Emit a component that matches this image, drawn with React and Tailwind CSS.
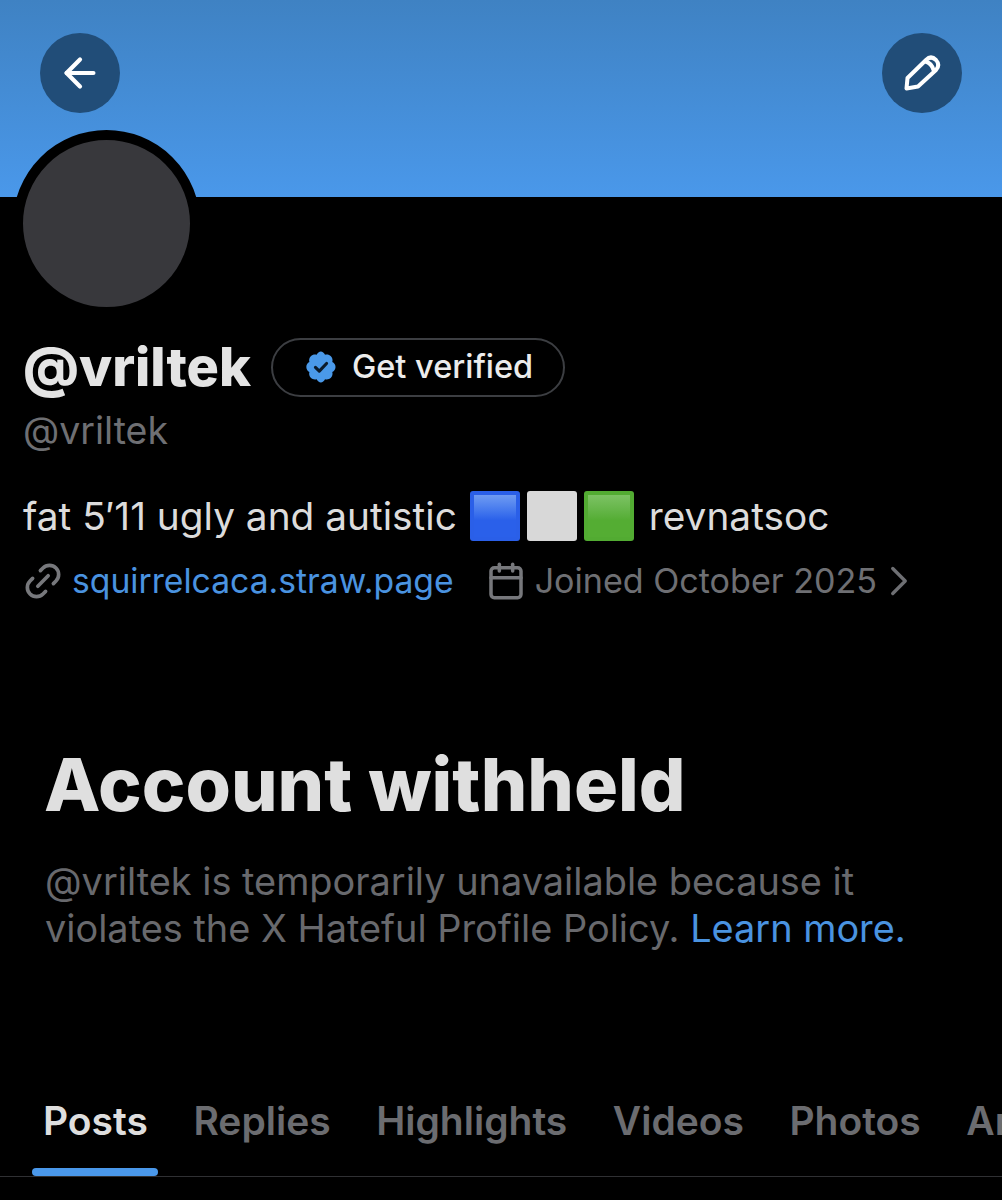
import React from 'react'
import { ArrowLeft, Calendar, ChevronRight, Link2 } from 'lucide-react'

const tabs = ['Posts', 'Replies', 'Highlights', 'Videos', 'Photos', 'Articles']

const RoundButton = ({ children }) => (
    <button className="w-[80px] h-[80px] rounded-full bg-[#214d78] flex items-center justify-center text-white">
        {children}
    </button>
)

const PencilIcon = () => (
    <svg width="80" height="80" viewBox="0 0 80 80" fill="none" stroke="currentColor" strokeWidth="4" strokeLinejoin="round" strokeLinecap="round">
        <path d="M24.500 55.500L25.500 45L44 27Q49 22 54 27Q58.500 32 54 37L36 53.500Z" />
        <path d="M43.500 28.500Q49.500 30 51.500 37" />
    </svg>
)

const VerifiedBadge = () => (
    <svg width="34" height="34" viewBox="0 0 22 22">
        <path fill="#4a99e9" d="M20.4 11c0-1.4-.9-2.7-2.1-3.2.4-1.3.1-2.8-.9-3.8s-2.5-1.3-3.8-.9C13.1 1.9 11.9 1 10.9 1S8.700 1.900 8.200 3.100c-1.300-.4-2.800-.1-3.800.9s-1.300 2.500-.9 3.800C2.300 8.300 1.500 9.600 1.500 11s.8 2.700 2 3.200c-.4 1.300-.1 2.800.9 3.800s2.500 1.300 3.800.9c.5 1.200 1.700 2.100 2.700 2.100s2.200-.9 2.700-2.100c1.300.4 2.800.1 3.800-.9s1.300-2.500.9-3.800c1.200-.5 2.100-1.800 2.100-3.200z" />
        <path fill="none" stroke="#0b1a2a" strokeWidth="2" strokeLinecap="round" strokeLinejoin="round" d="M7.400 11.200l2.500 2.500 4.700-5" />
    </svg>
)

// emoji square: flat frame with a lighter bevel inside
const Square = ({ className, innerClassName }) => (
    <span className={`block w-[50px] h-[50px] rounded-[3px] p-[4px] ${className}`}>
        <span className={`block w-full h-full ${innerClassName}`} />
    </span>
)

export default function App() {
    return (
        <div className="w-[1002px] h-[1200px] overflow-hidden bg-black font-['Inter',sans-serif]">
            {/* Banner */}
            <div className="h-[197px] bg-gradient-to-b from-[#3f82c3] to-[#4a98ea] flex justify-between items-start pt-[33px] px-[40px]">
                <RoundButton>
                    <ArrowLeft size={46} strokeWidth={2.2} />
                </RoundButton>
                <RoundButton>
                    <PencilIcon />
                </RoundButton>
            </div>

            {/* Avatar */}
            <div className="relative mt-[-67px] ml-[13px] w-[187px] h-[187px] rounded-full border-[10px] border-black bg-[#38383c]" />

            {/* Profile */}
            <div className="pl-[23px]">
                <div className="flex items-center mt-[20px] h-[60px]">
                    <h1 className="text-[54px] leading-none font-extrabold text-[#e4e4e4]">@vriltek</h1>
                    <div className="ml-[20px] w-[294px] h-[59px] rounded-full border-2 border-[#3c3e42] flex items-center pl-[31px] gap-[14px]">
                        <VerifiedBadge />
                        <span className="text-[32.500px] font-medium text-[#ececec]">Get verified</span>
                    </div>
                </div>
                <p className="mt-[12px] text-[37.500px] leading-[44px] text-[#6e6f73]">@vriltek</p>
                <div className="mt-[37px] flex items-center h-[52px] text-[38.800px] text-[#dcdcdc]">
                    <span>fat 5′11 ugly and autistic</span>
                    <span className="ml-[13px] flex gap-[7px]">
                        <Square className="bg-[#2a5fe8]" innerClassName="bg-gradient-to-b from-[#6f9bf2] to-[#2a60ea] to-60%" />
                        <Square className="bg-[#d8d8d8]" innerClassName="bg-[#d8d8d8]" />
                        <Square className="bg-[#52ab32]" innerClassName="bg-gradient-to-b from-[#7cc263] to-[#54ad33] to-60%" />
                    </span>
                    <span className="ml-[15px]">revnatsoc</span>
                </div>
                <div className="mt-[17px] flex items-center h-[44px] text-[33.700px] text-[#6e6f73]">
                    <Link2 size={44} strokeWidth={2} className="-rotate-45 -ml-[2px] text-[#77787c]" />
                    <span className="ml-[7px] text-[#4a93e0]">squirrelcaca.straw.page</span>
                    <Calendar size={40} strokeWidth={2.1} className="ml-[32px] text-[#77787c]" />
                    <span className="ml-[9px] text-[34.100px]">Joined October 2025</span>
                    <ChevronRight size={50} strokeWidth={1.6} className="-ml-[3px]" />
                </div>
            </div>

            {/* Withheld notice */}
            <div className="pl-[45px] mt-[142px]">
                <h2 className="-ml-[1px] text-[73.400px] leading-[80px] font-extrabold text-[#dfdfdf]">Account withheld</h2>
                <p className="mt-[33px] text-[37.900px] leading-[47px] text-[#68696d]">
                    @vriltek is temporarily unavailable because it
                    <br />
                    violates the X Hateful Profile Policy. <span className="text-[#4a93e0]">Learn more.</span>
                </p>
            </div>

            {/* Tabs */}
            <div className="mt-[147px] h-[78px] border-b border-[#2f3033] flex pl-[31px] gap-[21.500px]">
                {tabs.map((tab, i) => (
                    <div key={tab} className={`relative shrink-0 px-[12px] text-[39px] leading-[44px] font-semibold ${i === 0 ? 'text-[#dedede]' : 'text-[#6b6c70]'}`}>
                        {tab}
                        {i === 0 && <div className="absolute left-[1px] right-[2px] bottom-0 h-[8px] rounded-full bg-[#4a98ea]" />}
                    </div>
                ))}
            </div>
        </div>
    )
}
